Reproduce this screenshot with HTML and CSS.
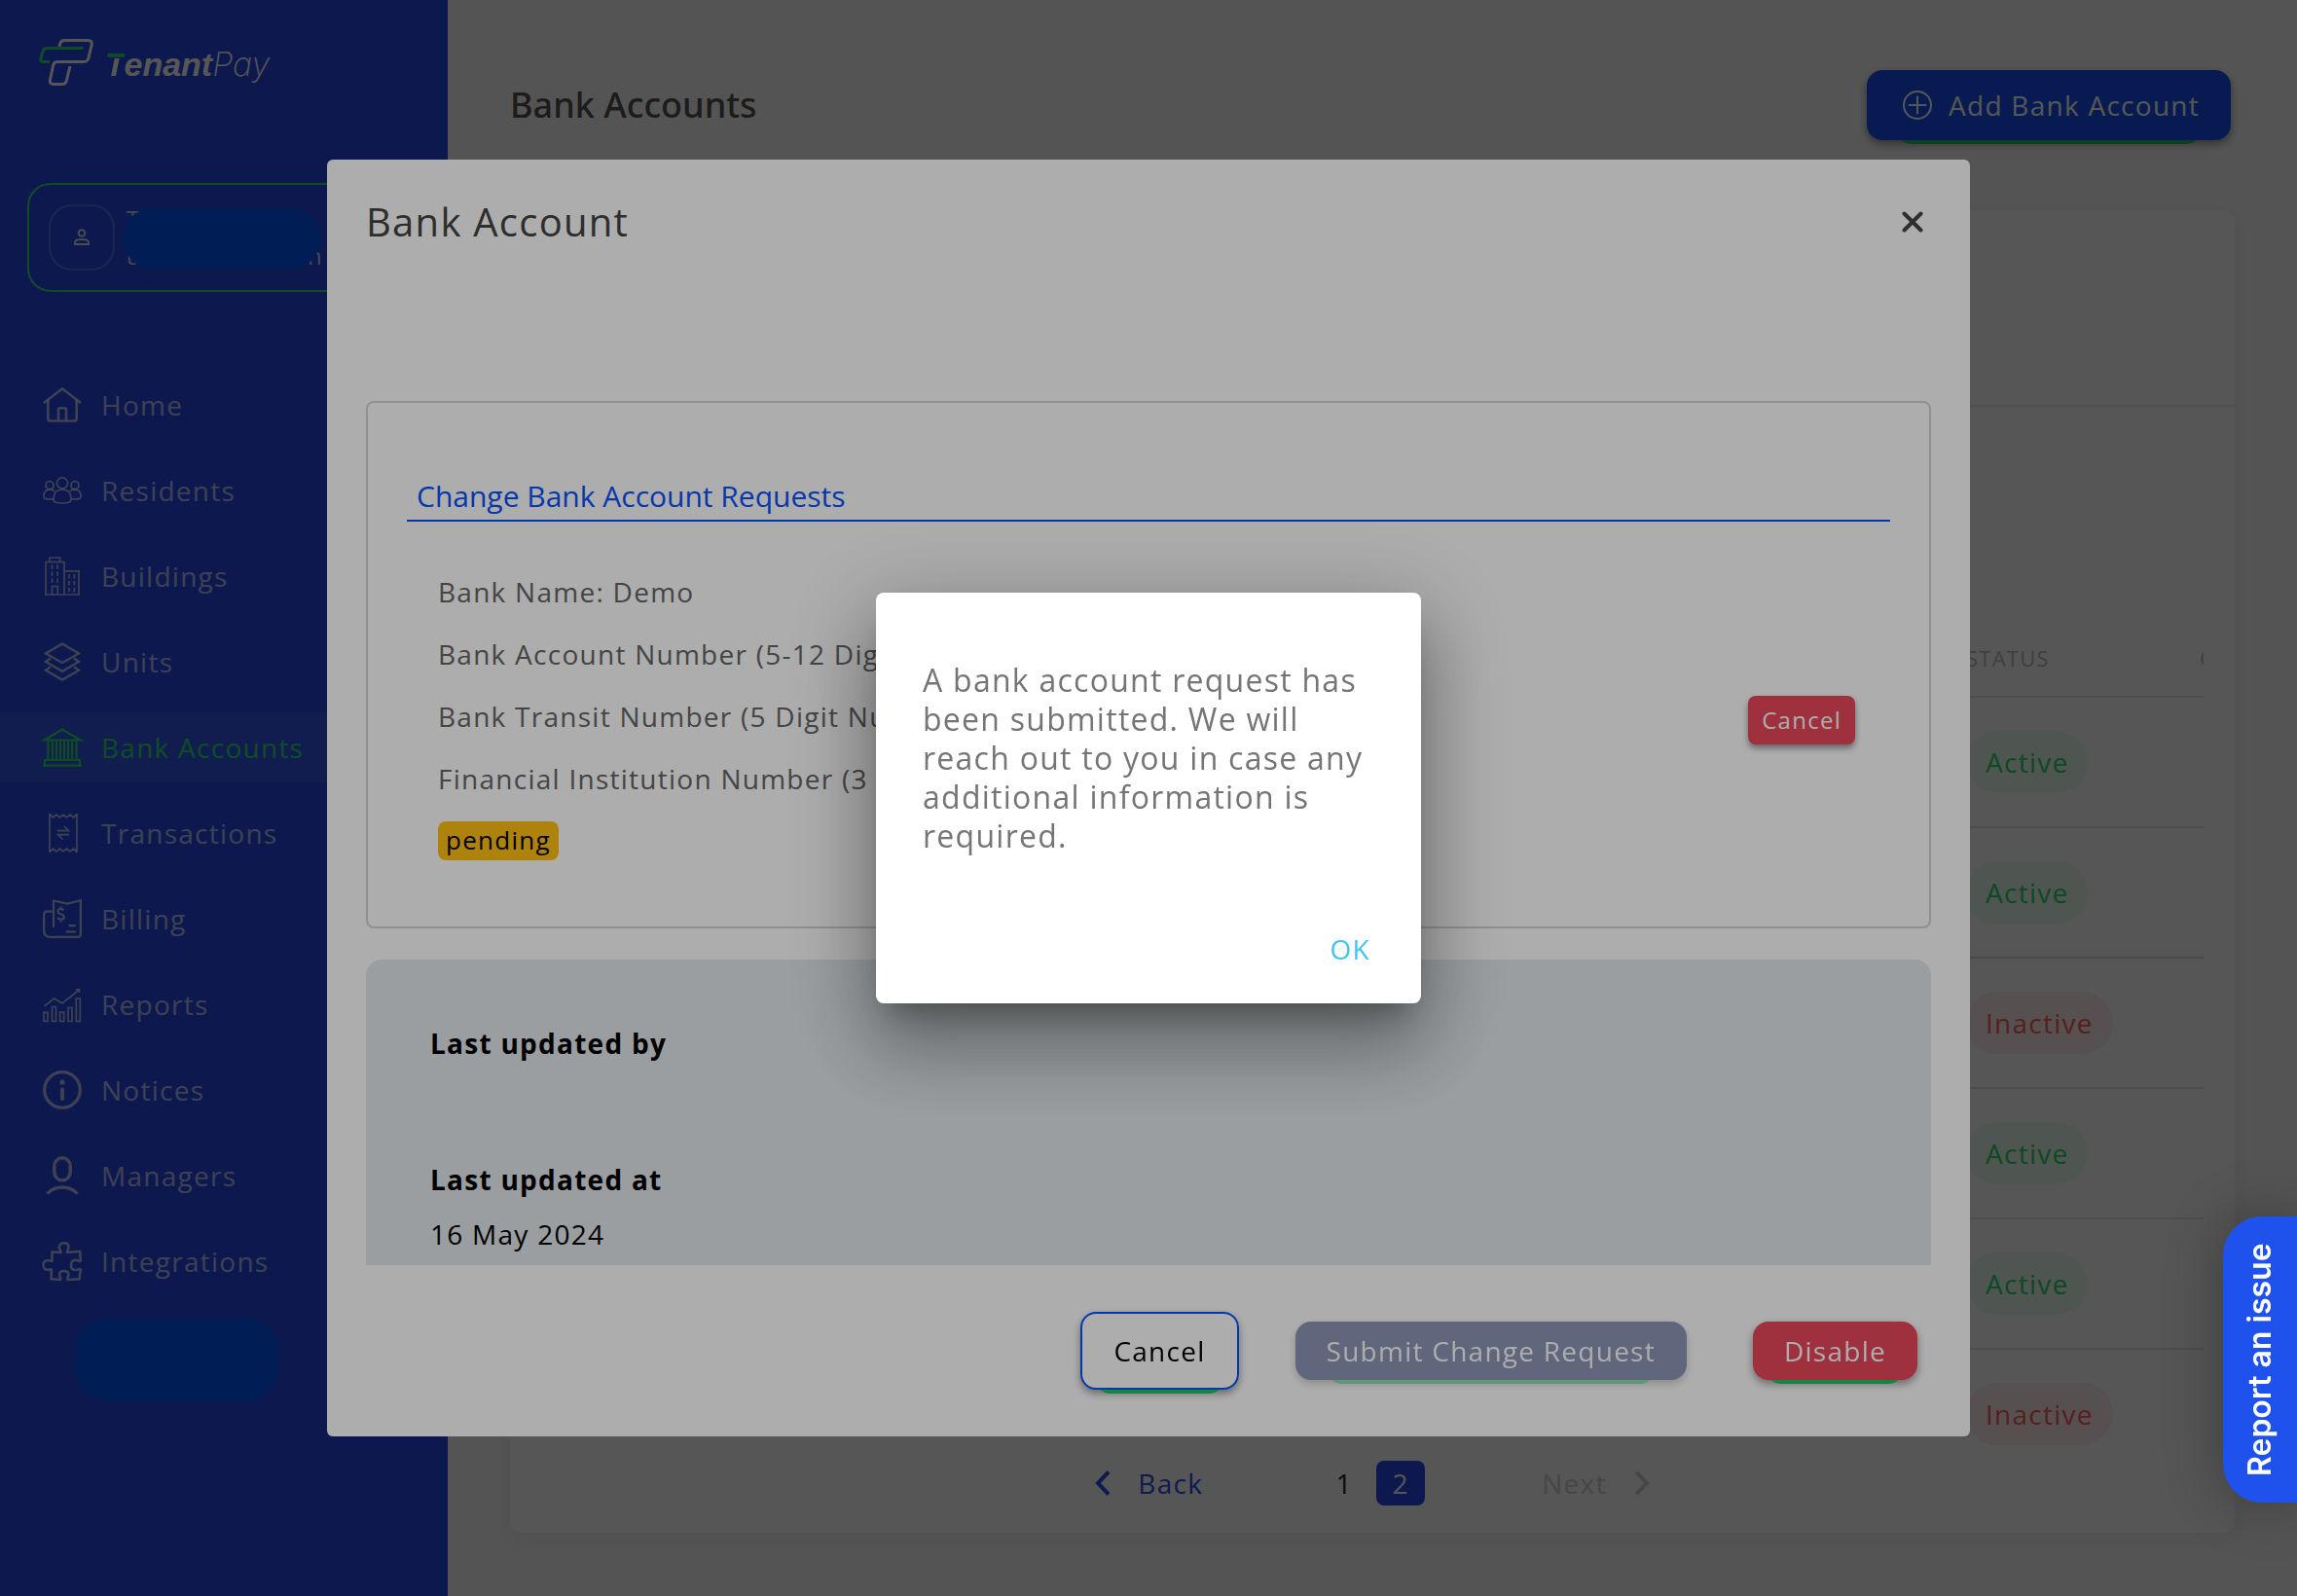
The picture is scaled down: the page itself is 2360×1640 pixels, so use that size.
FILE: index.html
```html
<!DOCTYPE html>
<html lang="en">
<head>
<meta charset="UTF-8">
<meta name="viewport" content="width=device-width, initial-scale=1.0">
<title>TenantPay - Bank Accounts</title>
<link rel="stylesheet" href="styles.css">
</head>
<body>

<div class="app">
    <aside class="sidebar">
        <a class="logo" href="#">
            <svg width="56" height="48" viewBox="0 0 56 48" fill="none" stroke-width="3">
                <path stroke="#fff" d="M21 8 L21.5 5.500 Q22.500 1.500 26 1.500 H50 Q55 1.500 54.200 6 L51 19.500 Q50 23.500 46 23.500 H19 Q15.500 23.500 14.700 27 L11.500 42 Q10.800 46.500 15 46.500 H24 Q27.500 46.500 28.300 43 L32 28"/>
                <path stroke="#2fe070" d="M45.500 9.500 H8 Q5 9.500 4.200 12.500 L1.800 20 Q1 23.500 5 23.500 H11"/>
            </svg>
            <span class="logo-text"><b><span class="logo-t">T</span>enant</b>Pay</span>
        </a>

        <div class="user-box">
            <span class="avatar">
                <svg width="18" height="18" viewBox="0 0 18 18" fill="none" stroke="currentColor" stroke-width="2">
                    <circle cx="9" cy="4.500" r="3.300"/>
                    <path d="M2 16 V14 Q2 11 9 11 Q16 11 16 14 V16 Z"/>
                </svg>
            </span>
            <div class="user-info">
                <div class="user-line"><span>T</span></div>
                <div class="user-line"><span>u</span><span>n</span></div>
                <span class="user-mask"></span>
            </div>
        </div>

        <nav class="nav">
            <a class="nav-item" href="#">
                <svg class="nav-icon" viewBox="0 0 40 40" stroke-width="2.600">
                    <path d="M1 18 L20 3.500 L39 18"/>
                    <path d="M5.300 15 V34 Q5.300 36.500 7.500 36.500 H32.500 Q34.700 36.500 34.700 34 V15"/>
                    <path d="M16 36 V25 Q16 23.300 17.500 23.300 H22.500 Q24 23.300 24 25 V36"/>
                </svg>
                Home
            </a>
            <a class="nav-item" href="#">
                <svg class="nav-icon" viewBox="0 0 40 40" stroke-width="1.700">
                    <circle cx="20" cy="12.500" r="5.600"/>
                    <circle cx="7" cy="14.700" r="4"/>
                    <circle cx="33" cy="14.700" r="4"/>
                    <path d="M11 29 C11 22 15 19 20 19 C25 19 29 22 29 29 C29 32.500 26 33 20 33 C14 33 11 32.500 11 29 Z"/>
                    <path d="M10.500 28.800 H4.500 C2 28.800 1 28 1 26 C1 21 4 19 7.500 19 C9.500 19 11 19.500 12.300 21"/>
                    <path d="M29.500 28.800 H35.500 C38 28.800 39 28 39 26 C39 21 36 19 32.500 19 C30.500 19 29 19.500 27.700 21"/>
                </svg>
                Residents
            </a>
            <a class="nav-item" href="#">
                <svg class="nav-icon" viewBox="0 0 40 40" stroke-width="1.700">
                    <path d="M3 39 V5.500 H22 V39 Z M7 5 V1 H17.500 V5 M22 14.800 H37 V39 H22 M9.500 39 V30.500 H15.300 V39"/>
                    <path d="M9.500 8.300 V12.700 M15 8.300 V12.700 M9.500 15.300 V19.700 M15 15.300 V19.700 M9.500 22.300 V26.700 M15 22.300 V26.700"/>
                    <path d="M27 18 V22.300 M32.300 18 V22.300 M27 25 V29.300 M32.300 25 V29.300 M27 32 V36.300 M32.300 32 V36.300"/>
                </svg>
                Buildings
            </a>
            <a class="nav-item" href="#">
                <svg class="nav-icon" viewBox="0 0 40 40" stroke-width="2.400">
                    <path d="M20 1.500 L37 11.500 L20 21 L3 11.500 Z"/>
                    <path d="M8 16.500 L3 20 L20 29.800 L37 20 L32 16.500"/>
                    <path d="M8 25.300 L3 28.700 L20 38.500 L37 28.700 L32 25.300"/>
                </svg>
                Units
            </a>
            <a class="nav-item active" href="#">
                <svg class="nav-icon" viewBox="0 0 40 40" stroke-width="2.200">
                    <path d="M1.500 12.500 L20 1.500 L38.500 12.500 Z"/>
                    <path d="M5.500 13 V32 M10 13 V32 M14 13 V32 M18 13 V32 M22 13 V32 M26 13 V32 M30 13 V32 M34.500 13 V32"/>
                    <path d="M0 38.700 H40 M2 38 V32.800 H38 V38"/>
                </svg>
                Bank Accounts
            </a>
            <a class="nav-item" href="#">
                <svg class="nav-icon" viewBox="0 0 40 40" stroke-width="1.700">
                    <path d="M7 0 V40 M35 0 V40"/>
                    <path d="M7 1 L10.500 4 L14 1 L17.500 4 L21 1 L24.500 4 L28 1 L31.500 4 L35 1"/>
                    <path d="M7 39 L10.500 36 L14 39 L17.500 36 L21 39 L24.500 36 L28 39 L31.500 36 L35 39"/>
                    <path d="M15 17.700 H26.500 L22 13 M27 21.700 H15.500 L20.500 26.500"/>
                </svg>
                Transactions
            </a>
            <a class="nav-item" href="#">
                <svg class="nav-icon" viewBox="0 0 40 40" stroke-width="2.200">
                    <path d="M11 29 V1.500 L25.300 4.500 L38.900 1.200 V36 Q38.900 38.900 36 38.900 H8 Q1.100 38.900 1.100 32 V16 Q1.100 12.700 4.500 12.700 H11"/>
                    <path d="M21.500 11.500 Q20.500 10 18.500 10 Q15.500 10 15.500 12.500 Q15.500 14.500 18.500 15.200 Q21.700 16 21.700 18.300 Q21.700 20.700 18.500 20.700 Q16 20.700 15.300 19 M18.500 7.500 V10 M18.500 20.700 V23.500"/>
                    <path d="M27.500 27.200 H33 M24.500 33.300 H33" stroke-linecap="round"/>
                </svg>
                Billing
            </a>
            <a class="nav-item" href="#">
                <svg class="nav-icon" viewBox="0 0 40 40" stroke-width="1.700">
                    <path d="M1 28.300 H5 V37.300 H1 Z M9.500 22.500 H13.500 V37.300 H9.500 Z M17.700 28 H21.700 V37.300 H17.700 Z M26 23.500 H30 V37.300 H26 Z M34.300 14 H38.300 V37.300 H34.300 Z"/>
                    <path d="M1.500 22 L11.500 14 L20 19 L37.500 5 M34 4.800 H37.500 V8"/>
                </svg>
                Reports
            </a>
            <a class="nav-item" href="#">
                <svg class="nav-icon" viewBox="0 0 40 40" stroke-width="3.300">
                    <circle cx="20" cy="20" r="18.300"/>
                    <circle cx="20" cy="12" r="2.600" fill="currentColor" stroke="none"/>
                    <path d="M20 19.500 V29" stroke-width="4" stroke-linecap="round"/>
                </svg>
                Notices
            </a>
            <a class="nav-item" href="#">
                <svg class="nav-icon" viewBox="0 0 40 40" stroke-width="3.500">
                    <rect x="11.800" y="1.800" width="16.400" height="23" rx="8.200"/>
                    <path d="M4.500 38.500 Q11 32 20 32 Q29 32 35.500 38.500"/>
                </svg>
                Managers
            </a>
            <a class="nav-item" href="#">
                <svg class="nav-icon" viewBox="0 0 40 40" stroke-width="2.500">
                    <path d="M9.500 10.500 L18.500 11 C19.500 9.500 16.800 8.500 16.800 5.500 C16.800 3 19 1.300 21.500 1.300 C24.500 1.300 26.500 3 26.500 5.500 C26.500 8.500 24 9.500 25 11 L38.200 9.800 L38.800 19.500 C37.500 21 36 18.500 33 18.700 C30.500 19 29 21 29 24 C29 27 30.500 28.800 33 29 C36 29.300 37.500 27 38.800 28.500 L37.500 38.300 L25.500 39 C24 37.500 26.500 36.500 26.500 34 C26.500 31.500 24.500 30 21.500 30 C19 30 17 31.500 17 34 C17 36.500 19.500 37.500 18 39 L8.500 38.300 L9 28.500 C8 27.500 7 29 5 29 C2.500 29 .500 27 .500 24 C.500 21 2.500 19 5 19 C7.500 19 8.500 20.500 9.500 19.500 Z"/>
                </svg>
                Integrations
            </a>
        </nav>
        <div class="sidebar-mask"></div>
    </aside>

    <main class="main">
        <header class="page-header">
            <h1>Bank Accounts</h1>
            <button class="btn btn-add" type="button">
                <svg width="30" height="30" viewBox="0 0 30 30" fill="none" stroke="currentColor" stroke-width="2">
                    <circle cx="15" cy="15" r="14"/>
                    <path d="M15 6.500 V23.500 M6.500 15 H23.500" stroke-linecap="round"/>
                </svg>
                Add Bank Account
            </button>
        </header>

        <section class="card">
            <div class="card-top"></div>
            <div class="table-wrap">
                <table>
                    <thead>
                        <tr><th></th><th class="col-status">STATUS</th><th class="col-created">CREATED</th></tr>
                    </thead>
                    <tbody>
                        <tr><td></td><td><span class="status">Active</span></td><td></td></tr>
                        <tr><td></td><td><span class="status">Active</span></td><td></td></tr>
                        <tr><td></td><td><span class="status inactive">Inactive</span></td><td></td></tr>
                        <tr><td></td><td><span class="status">Active</span></td><td></td></tr>
                        <tr><td></td><td><span class="status">Active</span></td><td></td></tr>
                        <tr><td></td><td><span class="status inactive">Inactive</span></td><td></td></tr>
                    </tbody>
                </table>
            </div>
            <div class="pagination">
                <button class="page-step" type="button">
                    <svg width="16" height="26" viewBox="0 0 16 26" fill="none" stroke="currentColor" stroke-width="4"><path d="M14 1.500 L3 13 L14 24.500"/></svg>
                    Back
                </button>
                <div class="page-numbers">
                    <button class="page-number" type="button">1</button>
                    <button class="page-number current" type="button">2</button>
                </div>
                <button class="page-step" type="button" disabled>
                    Next
                    <svg width="16" height="26" viewBox="0 0 16 26" fill="none" stroke="currentColor" stroke-width="4"><path d="M2 1.500 L13 13 L2 24.500"/></svg>
                </button>
            </div>
        </section>
    </main>
</div>

<!-- Bank account modal -->
<div class="backdrop backdrop-modal">
    <div class="modal" role="dialog" aria-labelledby="modalTitle">
        <div class="modal-header">
            <h2 id="modalTitle">Bank Account</h2>
            <button class="close" type="button" aria-label="Close">
                <svg width="22" height="22" viewBox="0 0 22 22" fill="none" stroke="currentColor" stroke-width="4" stroke-linecap="round"><path d="M2.500 2.500 L19.500 19.500 M19.500 2.500 L2.500 19.500"/></svg>
            </button>
        </div>

        <div class="modal-body">
            <div class="request-card">
                <h3>Change Bank Account Requests</h3>
                <div class="request">
                    <div class="request-info">
                        <p>Bank Name: Demo</p>
                        <p>Bank Account Number (5-12 Digits)</p>
                        <p>Bank Transit Number (5 Digit Number)</p>
                        <p>Financial Institution Number (3 Digits)</p>
                        <span class="badge">pending</span>
                    </div>
                    <button class="btn-small" type="button">Cancel</button>
                </div>
            </div>
            <dl class="updates">
                <dt>Last updated by</dt>
                <dd></dd>
                <dt>Last updated at</dt>
                <dd>16 May 2024</dd>
            </dl>
        </div>

        <div class="modal-footer">
            <button class="btn btn-outline" type="button">Cancel</button>
            <button class="btn btn-submit" type="button" disabled>Submit Change Request</button>
            <button class="btn btn-danger" type="button">Disable</button>
        </div>
    </div>
</div>

<!-- Confirmation message -->
<div class="backdrop backdrop-message">
    <div class="message" role="alertdialog" aria-labelledby="messageText">
        <p id="messageText">A bank account request has been submitted. We will reach out to you in case any additional information is required.</p>
        <button class="btn-ok" type="button">OK</button>
    </div>
</div>

<button class="report" type="button">Report an issue</button>

</body>
</html>
```
FILE: styles.css
```css
* {
    box-sizing: border-box;
}
body {
    margin: 0;
    background-color: #f9f9f9;
    font-family: "Open Sans", sans-serif;
    font-size: 28px;
    line-height: 40px;
    letter-spacing: 0.045em;
}
h1, h2, h3, p, dl, dd {
    margin: 0;
}
button {
    border: none;
    background: none;
    padding: 0;
    font: inherit;
    letter-spacing: inherit;
    color: inherit;
    cursor: pointer;
}
.app {
    display: flex;
    min-height: 100vh;
}

/* Sidebar */
.sidebar {
    width: 460px;
    flex-shrink: 0;
    padding-top: 40px;
    background-color: #284de8;
}
.logo {
    display: flex;
    align-items: center;
    gap: 12px;
    height: 48px;
    margin-left: 40px;
    color: #fff;
    text-decoration: none;
}
.logo-text {
    padding-top: 4px;
    font-family: Inter, sans-serif;
    font-size: 34px;
    font-style: italic;
    font-weight: 200;
    letter-spacing: 0;
}
.logo-text b {
    font-family: "Liberation Sans", sans-serif;
    font-weight: 700;
}
.logo-t {
    background: linear-gradient(#2fe070 12px, transparent 12px, transparent 13px, #fff 13px);
    -webkit-background-clip: text;
    background-clip: text;
    color: transparent;
}
.user-box {
    display: flex;
    align-items: center;
    gap: 12px;
    height: 112px;
    margin: 100px 28px 80px;
    padding: 0 20px;
    border: 2px solid #2fe070;
    border-radius: 24px;
    color: rgba(255, 255, 255, 0.8);
}
.avatar {
    display: flex;
    align-items: center;
    justify-content: center;
    width: 68px;
    height: 68px;
    border: 2px solid rgba(255, 255, 255, 0.2);
    border-radius: 24px;
}
.user-info {
    position: relative;
    width: 202px;
    font-size: 24px;
    line-height: 38px;
}
.user-line {
    display: flex;
    justify-content: space-between;
}
.user-mask {
    position: absolute;
    top: 8px;
    left: -4px;
    width: 204px;
    height: 62px;
    border-radius: 32px;
    background-color: #005bff;
}
.nav {
    display: flex;
    flex-direction: column;
    gap: 16px;
}
.nav-item {
    display: flex;
    align-items: center;
    gap: 20px;
    height: 72px;
    padding-left: 44px;
    color: rgba(255, 255, 255, 0.66);
    text-decoration: none;
}
.nav-item.active {
    background-color: rgba(255, 255, 255, 0.06);
    color: #2fe070;
}
.nav-icon {
    width: 40px;
    height: 40px;
    fill: none;
    stroke: currentColor;
    overflow: visible;
}
.sidebar-mask {
    width: 210px;
    height: 86px;
    margin: 22px 0 0 77px;
    border-radius: 36px;
    background-color: #005bff;
}

/* Page */
.main {
    flex: 1;
    min-width: 0;
    padding: 72px 64px 0;
}
.page-header {
    display: flex;
    align-items: center;
    justify-content: space-between;
    height: 72px;
    padding-right: 4px;
}
h1 {
    color: #555;
    font-family: "Noto Sans", "Open Sans", sans-serif;
    font-size: 36px;
    font-weight: 500;
    letter-spacing: 0;
}
.btn {
    position: relative;
    height: 60px;
    padding: 0 32px;
    border-radius: 16px;
    box-shadow: 0 4px 8px rgba(0, 0, 0, 0.4);
    color: #fff;
}
.btn::after {
    content: "";
    position: absolute;
    left: 8%;
    right: 8%;
    bottom: -4px;
    height: 32px;
    border-radius: 0 0 16px 16px;
    background-color: #1fc464;
    clip-path: inset(28px 0 0 0);
}
.btn-add {
    display: flex;
    align-items: center;
    gap: 17px;
    height: 72px;
    padding: 0 32px 0 37px;
    background-color: #1753f5;
}
.card {
    margin-top: 72px;
    border-radius: 12px;
    background-color: #fff;
    box-shadow: 0 6px 24px rgba(0, 0, 0, 0.05);
}
.card-top {
    height: 202px;
    border-bottom: 2px solid #e8e8e8;
}
.table-wrap {
    margin: 0 32px 0 40px;
    padding-top: 243px;
    overflow: hidden;
}
table {
    width: calc(100% + 240px);
    table-layout: fixed;
    border-collapse: separate;
    border-spacing: 0;
}
th, td {
    padding: 0;
    border-bottom: 2px solid #e2e2e2;
    text-align: left;
}
th {
    padding-bottom: 24px;
    color: #bdbdbd;
    font-size: 22px;
    line-height: 30px;
    font-weight: 500;
}
.col-status {
    width: 240px;
}
.col-created {
    width: 244px;
}
td {
    height: 134px;
}
tbody tr:last-child td {
    height: 98px;
    padding-top: 34px;
    border-bottom: none;
}
.status {
    display: inline-block;
    padding: 12px 20px;
    border-radius: 32px;
    background-color: rgba(47, 224, 112, 0.1);
    color: #2cd968;
    font-weight: 500;
    vertical-align: middle;
}
.status.inactive {
    background-color: rgba(255, 90, 90, 0.1);
    color: #ff5f5f;
}
.pagination {
    display: flex;
    justify-content: center;
    align-items: center;
    gap: 120px;
    padding: 16px 0 28px;
}
.page-step {
    display: flex;
    align-items: center;
    gap: 28px;
    color: #2c50e8;
}
.page-step:disabled {
    color: #d1d1d1;
}
.page-numbers {
    display: flex;
    gap: 8px;
}
.page-number {
    width: 50px;
    height: 46px;
    border-radius: 8px;
    color: #222;
}
.page-number.current {
    background-color: #284de8;
    color: #fff;
}

/* Overlays */
.backdrop {
    position: fixed;
    inset: 0;
    display: flex;
    align-items: center;
    justify-content: center;
}
.backdrop-modal {
    background-color: rgba(0, 0, 0, 0.5);
}
.backdrop-message {
    background-color: rgba(0, 0, 0, 0.32);
}
.modal {
    display: flex;
    flex-direction: column;
    width: 72%;
    max-width: 1688px;
    height: 80vh;
    padding: 36px 40px 0;
    border-radius: 6px;
    background-color: #fff;
}
.modal-header {
    display: flex;
    align-items: center;
    justify-content: space-between;
    margin-bottom: 156px;
    padding-right: 8px;
    color: #444;
}
h2 {
    font-size: 40px;
    line-height: 56px;
    font-weight: 400;
}
.close {
    display: flex;
}
.modal-body {
    flex: 1;
    min-height: 0;
    overflow: hidden;
}
.request-card {
    padding: 76px 40px 68px;
    border: 2px solid #d4d4d4;
    border-radius: 8px;
}
h3 {
    padding: 0 10px 4px;
    border-bottom: 2px solid #0652fe;
    color: #0652fe;
    font-size: 30px;
    font-weight: 400;
    letter-spacing: 0;
}
.request {
    display: flex;
    align-items: center;
    justify-content: space-between;
    margin-top: 52px;
    padding: 0 36px 0 32px;
}
.request-info {
    display: flex;
    flex-direction: column;
    align-items: flex-start;
    gap: 24px;
    color: #666;
}
.badge {
    padding: 0 8px 2px;
    border-radius: 8px;
    background-color: #ffc214;
    color: #000;
    font-size: 26px;
    line-height: 38px;
}
.btn-small {
    height: 50px;
    margin-top: 8px;
    padding: 0 14px;
    border-radius: 8px;
    background-color: #eb475b;
    box-shadow: 0 4px 6px rgba(0, 0, 0, 0.4);
    color: #fff;
    font-size: 24px;
}
.updates {
    margin-top: 32px;
    padding: 66px 66px 40px;
    border-radius: 16px;
    background-color: #e3e9ed;
}
dt {
    font-weight: 700;
}
dd {
    min-height: 40px;
    margin: 16px 0 44px;
}
.modal-footer {
    display: flex;
    align-items: center;
    justify-content: flex-end;
    gap: 58px;
    height: 176px;
    padding-right: 14px;
}
.btn-outline {
    height: 80px;
    border: 2px solid #0652fe;
    background-color: #fff;
    color: #000;
}
.btn-outline::after {
    bottom: -6px;
}
.btn-submit {
    background-color: #1f3173;
    opacity: 0.5;
}
.btn-danger {
    margin-left: 10px;
    background-color: #eb475b;
}
.message {
    display: flex;
    flex-direction: column;
    width: 560px;
    padding: 70px 48px 38px;
    border-radius: 8px;
    background-color: #fff;
    box-shadow: 0 22px 30px -14px rgba(0, 0, 0, 0.3), 0 48px 76px 6px rgba(0, 0, 0, 0.22), 0 18px 92px 16px rgba(0, 0, 0, 0.18);
    color: #757575;
    font-size: 32px;
}
.btn-ok {
    align-self: flex-end;
    height: 36px;
    margin: 78px 4px 0 0;
    color: #40c4f4;
    font-size: 28px;
    line-height: 36px;
}
.report {
    position: fixed;
    right: 0;
    bottom: 96px;
    width: 76px;
    height: 294px;
    border-radius: 0 40px 40px 0;
    background-color: #1f51ed;
    box-shadow: 0 0 60px rgba(0, 0, 0, 0.3);
    color: #fff;
    font-family: Inter, sans-serif;
    font-size: 32px;
    font-weight: 600;
    letter-spacing: 0;
    writing-mode: vertical-rl;
    transform: rotate(180deg);
}
```
